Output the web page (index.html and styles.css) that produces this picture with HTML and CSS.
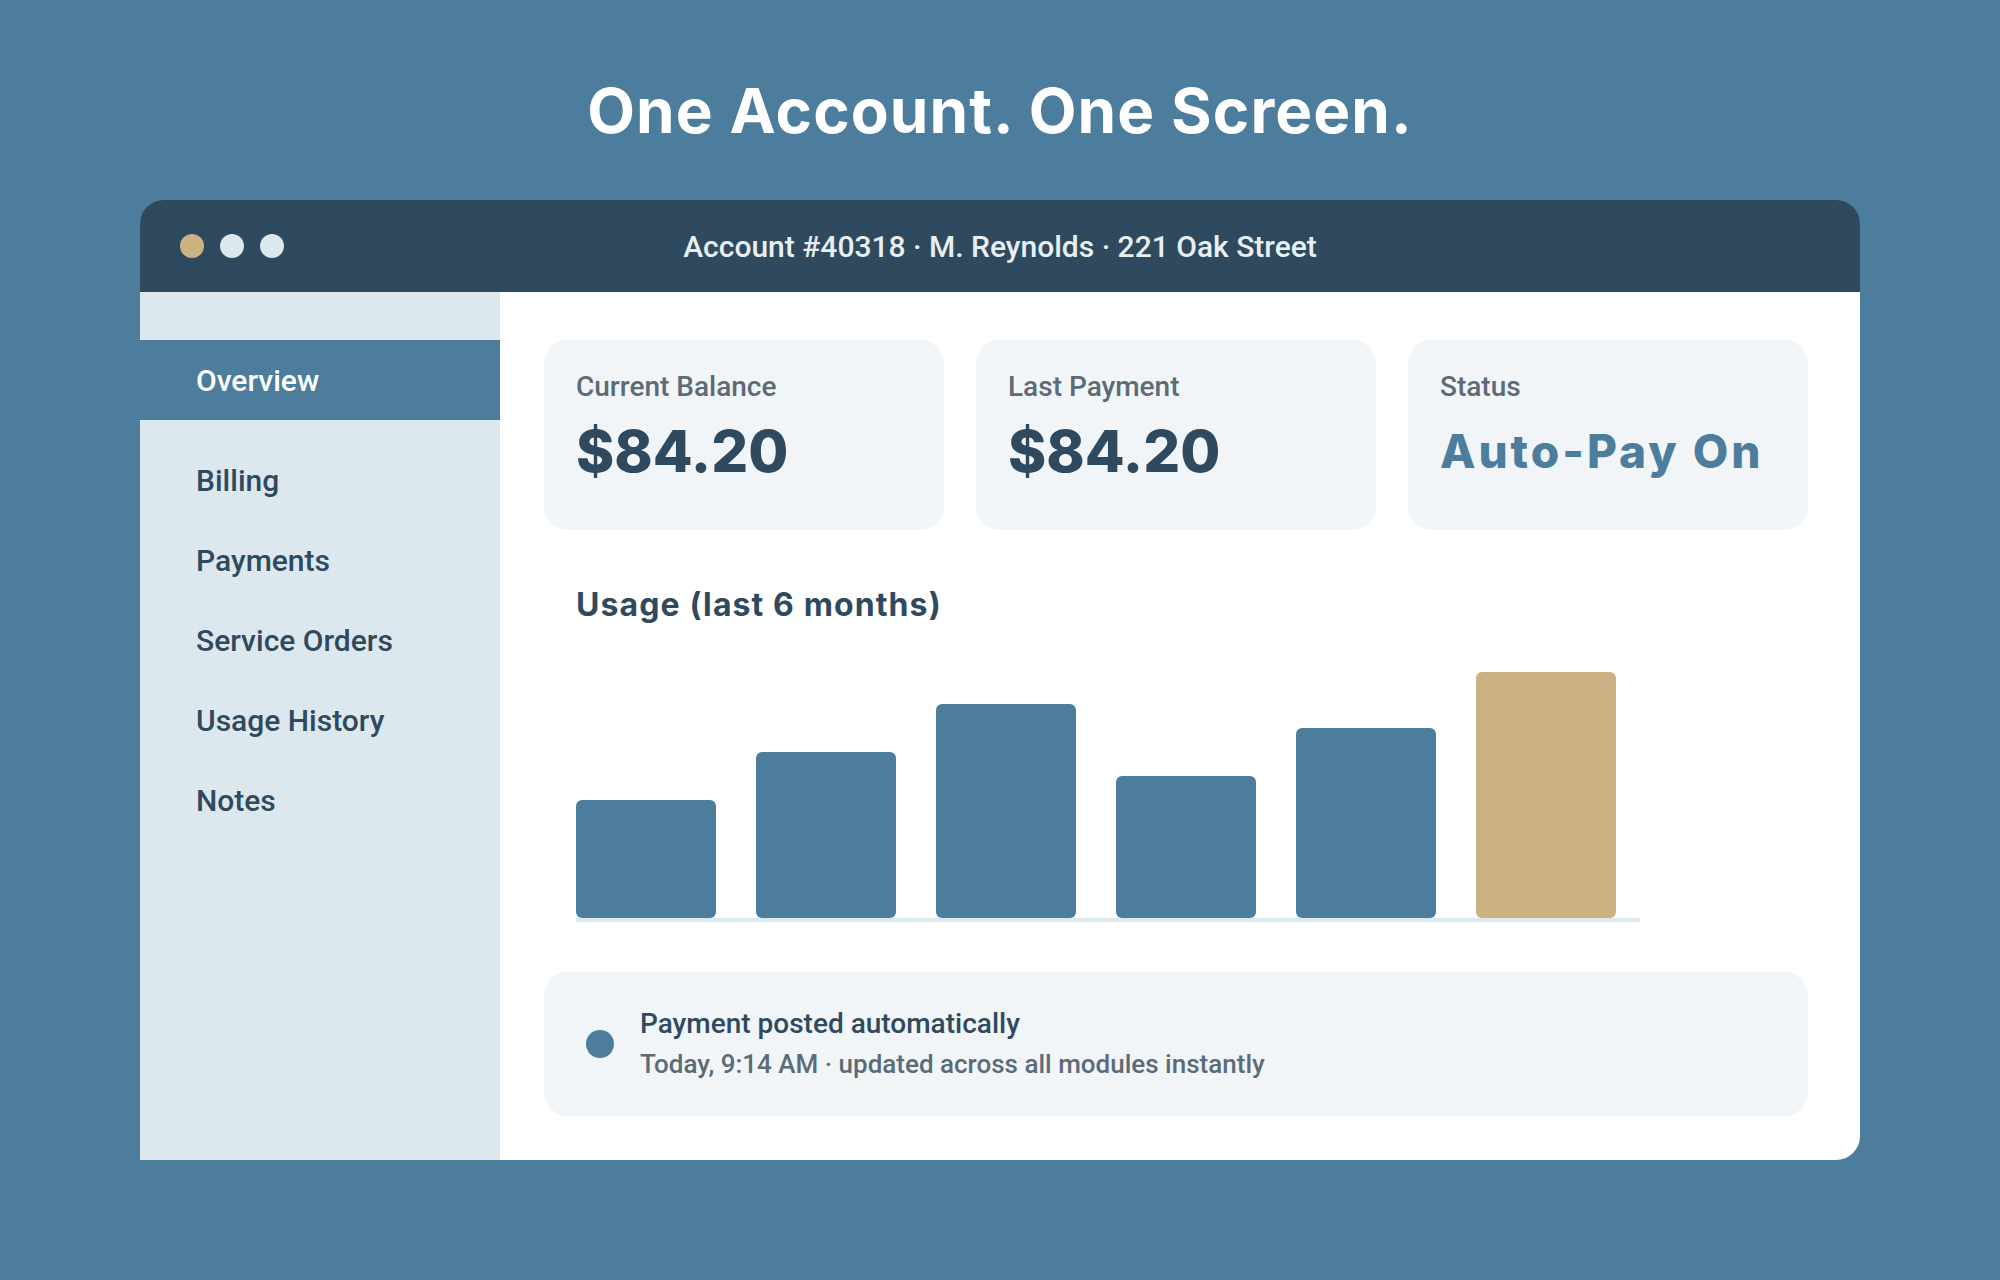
FILE: index.html
```html
<!DOCTYPE html>
<html lang="en">
<head>
<meta charset="utf-8">
<title>One Account. One Screen.</title>
<link rel="stylesheet" href="styles.css">
</head>
<body>
  <h1 class="headline">One Account. One Screen.</h1>
  <div class="window">
    <div class="titlebar">
      <div class="dots">
        <span class="dot dot-gold"></span>
        <span class="dot"></span>
        <span class="dot"></span>
      </div>
      <div class="titlebar-text">Account #40318 · M. Reynolds · 221 Oak Street</div>
      <div></div>
    </div>
    <div class="body">
      <nav class="sidebar">
        <div class="nav-item active">Overview</div>
        <div class="nav-item">Billing</div>
        <div class="nav-item">Payments</div>
        <div class="nav-item">Service Orders</div>
        <div class="nav-item">Usage History</div>
        <div class="nav-item">Notes</div>
      </nav>
      <main class="main">
        <div class="cards">
          <div class="card">
            <div class="card-label">Current Balance</div>
            <div class="card-value">$84.20</div>
          </div>
          <div class="card">
            <div class="card-label">Last Payment</div>
            <div class="card-value">$84.20</div>
          </div>
          <div class="card">
            <div class="card-label">Status</div>
            <div class="card-value status">Auto-Pay On</div>
          </div>
        </div>
        <section class="usage">
          <h2 class="usage-title">Usage (last 6 months)</h2>
          <div class="chart">
            <div class="bars">
              <div class="bar" style="height:118px"></div>
              <div class="bar" style="height:166px"></div>
              <div class="bar" style="height:214px"></div>
              <div class="bar" style="height:142px"></div>
              <div class="bar" style="height:190px"></div>
              <div class="bar bar-gold" style="height:246px"></div>
            </div>
            <div class="axis"></div>
          </div>
        </section>
        <div class="activity">
          <span class="activity-dot"></span>
          <div class="activity-text">
            <div class="activity-title">Payment posted automatically</div>
            <div class="activity-sub">Today, 9:14 AM · updated across all modules instantly</div>
          </div>
        </div>
      </main>
    </div>
  </div>
</body>
</html>
```

FILE: styles.css
```css
* { box-sizing: border-box; }

html, body {
  margin: 0;
  padding: 0;
}

body {
  background: #4c7d9c;
  width: 2000px;
  height: 1280px;
  overflow: hidden;
  font-family: "Roboto", "Liberation Sans", sans-serif;
  padding-top: 75px;
}

.headline {
  margin: 0 0 53px;
  height: 72px;
  line-height: 72px;
  text-align: center;
  color: #ffffff;
  font-family: "Inter", "DejaVu Sans", sans-serif;
  font-weight: 700;
  font-size: 62px;
  letter-spacing: 1.1px;
}

.window {
  width: 1720px;
  margin: 0 auto;
  border-radius: 24px;
}

.titlebar {
  height: 92px;
  background: #2f4a5e;
  border-radius: 24px 24px 0 0;
  display: grid;
  grid-template-columns: 1fr auto 1fr;
  align-items: center;
  padding: 0 40px;
}

.dots {
  display: flex;
  gap: 16px;
}

.dot {
  width: 24px;
  height: 24px;
  border-radius: 50%;
  background: #dde8ee;
}

.dot-gold { background: #cbb282; }

.titlebar-text {
  color: #e8eff3;
  font-size: 30px;
  font-weight: 500;
  white-space: nowrap;
}

.body {
  display: flex;
  height: 868px;
}

.sidebar {
  width: 360px;
  flex: none;
  background: #dde8ee;
  padding-top: 48px;
}

.nav-item {
  height: 80px;
  display: flex;
  align-items: center;
  padding-left: 56px;
  font-size: 30px;
  font-weight: 500;
  color: #2f4a5e;
}

.nav-item.active {
  background: #4c7d9c;
  color: #ffffff;
  margin-bottom: 20px;
}

.main {
  flex: 1;
  background: #ffffff;
  border-radius: 0 0 24px 0;
  padding: 48px 52px 44px 44px;
}

.cards {
  display: flex;
  gap: 32px;
}

.card {
  width: 400px;
  height: 190px;
  background: #f1f5f8;
  border-radius: 24px;
  padding: 27px 32px 0;
}

.card-label {
  font-size: 28px;
  font-weight: 500;
  color: #5b6b77;
  line-height: 40px;
}

.card-value {
  margin-top: 9px;
  font-family: "Inter", "DejaVu Sans", sans-serif;
  font-weight: 800;
  font-size: 58px;
  line-height: 70px;
  color: #2f4a5e;
}

.card-value.status {
  color: #4c7d9c;
  font-size: 46px;
  font-weight: 800;
  letter-spacing: 3px;
}

.usage {
  margin-top: 55px;
  padding-left: 32px;
}

.usage-title {
  margin: 0;
  height: 40px;
  line-height: 40px;
  font-family: "Inter", "DejaVu Sans", sans-serif;
  font-weight: 700;
  font-size: 32px;
  letter-spacing: 1.1px;
  color: #2f4a5e;
}

.chart {
  margin-top: 47px;
  width: 1064px;
}

.bars {
  height: 246px;
  display: flex;
  align-items: flex-end;
  gap: 40px;
}

.bar {
  width: 140px;
  background: #4c7d9c;
  border-radius: 6px;
}

.bar-gold { background: #cbb282; }

.axis {
  height: 4px;
  background: #dde8ee;
}

.activity {
  margin-top: 50px;
  height: 144px;
  background: #f1f5f8;
  border-radius: 24px;
  display: flex;
  align-items: center;
  padding-left: 42px;
  gap: 26px;
}

.activity-dot {
  width: 28px;
  height: 28px;
  border-radius: 50%;
  background: #4c7d9c;
  flex: none;
}

.activity-title {
  font-size: 28px;
  font-weight: 500;
  color: #2f4a5e;
  line-height: 36px;
}

.activity-sub {
  margin-top: 4px;
  font-size: 26px;
  font-weight: 500;
  color: #5b6b77;
  line-height: 36px;
}
```
